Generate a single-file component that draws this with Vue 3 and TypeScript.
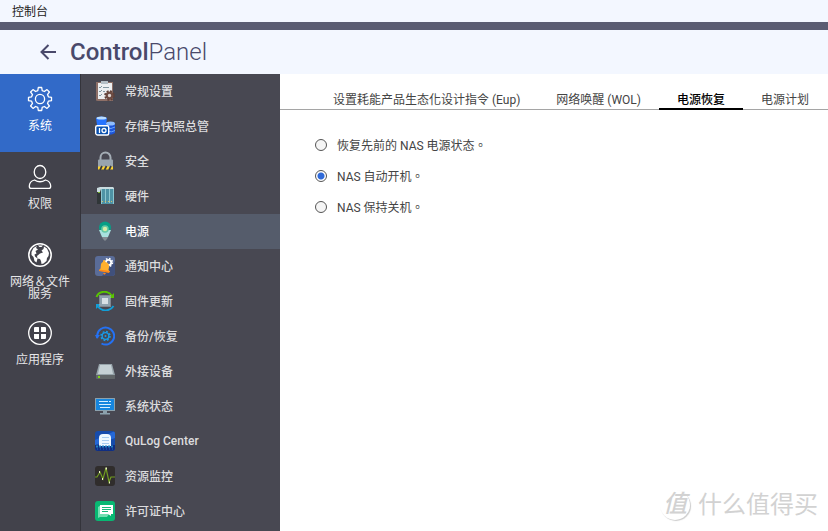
<script setup lang="ts">
import { ref } from 'vue'

interface Entry {
  id: string
  label: string
}

const sections: Entry[] = [
  { id: 'system', label: '系统' },
  { id: 'privilege', label: '权限' },
  { id: 'network', label: '网络＆文件服务' },
  { id: 'apps', label: '应用程序' },
]

const pages: Entry[] = [
  { id: 'general', label: '常规设置' },
  { id: 'storage', label: '存储与快照总管' },
  { id: 'security', label: '安全' },
  { id: 'hardware', label: '硬件' },
  { id: 'power', label: '电源' },
  { id: 'notify', label: '通知中心' },
  { id: 'firmware', label: '固件更新' },
  { id: 'backup', label: '备份/恢复' },
  { id: 'external', label: '外接设备' },
  { id: 'status', label: '系统状态' },
  { id: 'qulog', label: 'QuLog Center' },
  { id: 'resource', label: '资源监控' },
  { id: 'license', label: '许可证中心' },
]

const tabs: Entry[] = [
  { id: 'eup', label: '设置耗能产品生态化设计指令 (Eup)' },
  { id: 'wol', label: '网络唤醒 (WOL)' },
  { id: 'recovery', label: '电源恢复' },
  { id: 'schedule', label: '电源计划' },
]

const options: Entry[] = [
  { id: 'restore', label: '恢复先前的 NAS 电源状态。' },
  { id: 'on', label: 'NAS 自动开机。' },
  { id: 'off', label: 'NAS 保持关机。' },
]

const section = ref('system')
const page = ref('power')
const tab = ref('recovery')
const option = ref('on')
</script>

<template>
  <div class="window">
    <div class="titlebar">控制台</div>
    <header class="header">
      <button class="back" type="button" aria-label="返回">
        <svg width="16" height="16" viewBox="0 0 16 16" fill="none" stroke="currentColor" stroke-width="2">
          <path d="M16 8H1.5M8.5 1L1.5 8l7 7" />
        </svg>
      </button>
      <h1><b>Control</b>Panel</h1>
    </header>

    <div class="body">
      <nav class="sections">
        <button
          v-for="s in sections"
          :key="s.id"
          type="button"
          class="section"
          :class="{ active: section === s.id }"
          @click="section = s.id"
        >
          <svg width="26" height="26" viewBox="0 0 26 26" fill="none" stroke="#fff" stroke-width="1.3">
            <g v-if="s.id === 'system'" stroke-linejoin="round">
              <path d="M11.3 1.500h3.400l.5 3.100 2.200.9 2.600-1.900 2.400 2.400-1.900 2.600.9 2.200 3.100.5v3.400l-3.100.5-.9 2.200 1.900 2.600-2.400 2.400-2.600-1.900-2.200.9-.5 3.100h-3.400l-.5-3.100-2.200-.9L6 22.400 3.600 20l1.900-2.600-.9-2.200-3.100-.5v-3.400l3.100-.5.9-2.200L3.600 6 6 3.600l2.600 1.900 2.200-.9z" />
              <circle cx="13" cy="13" r="4.600" />
            </g>
            <g v-else-if="s.id === 'privilege'">
              <ellipse cx="13" cy="8" rx="5.800" ry="6.500" />
              <path d="M7.500 16C4 17 2.300 18.800 2.300 22.200c0 1.600.8 2.200 2 2.200h17.400c1.200 0 2-.6 2-2.200 0-3.400-1.700-5.200-5.200-6.200-3.400 2.200-7.600 2.200-11 0z" />
            </g>
            <g v-else-if="s.id === 'network'">
              <circle cx="13" cy="13" r="11.200" stroke-width="1.500" />
              <path fill="#fff" stroke="none" d="M4.500 10l2-4L10 4l-1 2 2 1.500-2.500 1.500 1 2.500-2 1 .5 2 2.500 2-1 4-2-1.500-1-4-2-2zM11 3.500h5L14.500 5h-2zM17 4.500l3 2 2 4.500-.5 3-1.500 2-.5 3-3 2.500-2 .5-.5-3-1-2-2.500-.5-.5-2.500 3-2.500 3-1-1.500-2 2-1.500z" />
            </g>
            <g v-else>
              <circle cx="13" cy="13" r="11.300" />
              <path fill="#fff" stroke="none" d="M8 7h3.500q.5 0 .5.500V12H7.500Q7 12 7 11.500V8q0-1 1-1zM14 7h4q1 0 1 1v3.500q0 .5-.5.500H14zM7 14h5v5H8q-1 0-1-1zM14 14h5v4q0 1-1 1h-4z" />
            </g>
          </svg>
          <span>{{ s.label }}</span>
        </button>
      </nav>

      <nav class="pages">
        <button
          v-for="p in pages"
          :key="p.id"
          type="button"
          class="page"
          :class="{ active: page === p.id }"
          @click="page = p.id"
        >
          <svg width="20" height="20" viewBox="0 0 20 20" fill="none">
            <g v-if="p.id === 'general'">
              <path fill="#8d6f67" d="M1 1h17v19H1z" />
              <path fill="#eceff1" d="M3 2h14v16H3z" />
              <path fill="#b4bfc6" d="M6 0h7v3H6z" />
              <path stroke="#8297a1" d="M4 6l1 1 2-2M8 6.500h6M4 10l1 1 2-2M8 10.500h2M4 14l1 1 2-2" />
              <circle cx="14.500" cy="14.500" r="4.300" stroke="#5f4038" stroke-width="2" stroke-dasharray="1.900 1.480" />
              <circle cx="14.500" cy="14.500" r="2.800" fill="#dcd6d4" stroke="#6d4b42" stroke-width="2.200" />
            </g>
            <g v-else-if="p.id === 'storage'">
              <path fill="#2774ff" d="M1 2q5-3 11 0l-1 7H2z" />
              <ellipse cx="6.500" cy="2" rx="5" ry="1.600" fill="#b9dcff" />
              <path fill="#1e55d7" d="M11 8h9v9q-4 3-9 1z" />
              <ellipse cx="15.500" cy="7.500" rx="4.500" ry="2" fill="#8fbeff" />
              <path stroke="#67a5ff" d="M12 12q4 1.500 8-1M13 15.500q4 1 7-1" />
              <rect x=".7" y="9.700" width="13" height="9.300" rx="1.500" fill="#084fae" stroke="#fff" stroke-width="1.400" />
              <path stroke="#fff" stroke-width="1.300" d="M4.500 12v5" />
              <circle cx="9" cy="14.500" r="2" stroke="#fff" stroke-width="1.300" />
            </g>
            <g v-else-if="p.id === 'security'">
              <path stroke="#a4adb5" stroke-width="2" d="M5.500 10V6.500a5 5 0 0 1 10 0V10" />
              <rect x="3" y="8.500" width="15" height="9" rx="1" fill="#98a4ae" />
              <path fill="#ffd52e" d="M3 15.500h15v3H3z" />
              <path stroke="#363a43" stroke-width="1.700" d="M7 15l-2 4M11.500 15l-2 4M16 15l-2 4" />
            </g>
            <g v-else-if="p.id === 'hardware'">
              <path fill="#303638" d="M2 3h4v15H2z" />
              <path fill="#4f93a5" d="M6 3h13v15H6z" />
              <path stroke="#8cc6d0" d="M6.500 3v15M10.500 3v14M14.500 3v14M18.500 3v15" />
              <path fill="#cadce0" d="M2 2l3-1h13l1 1v1H6L5 6H2z" />
              <path stroke="#77b72c" d="M3 6.500h2" />
              <path stroke="#d5bd65" stroke-dasharray="1 2" d="M7 15.500h11" />
            </g>
            <g v-else-if="p.id === 'power'">
              <circle cx="10" cy="6.500" r="6" fill="#079e86" />
              <path fill="#a9e1df" d="M4 9h12l-3 7H7z" />
              <circle cx="10" cy="8" r="3.800" fill="#65c8a5" />
              <circle cx="10" cy="8" r="2.200" fill="#d7eca7" />
              <path fill="#858c94" d="M7 16h6l-1 2-2 2-2-2z" />
            </g>
            <g v-else-if="p.id === 'notify'">
              <path fill="#5a6c98" d="M0 0h20v20H0z" />
              <path fill="#40507c" d="M20 5v15H7z" />
              <circle cx="13.500" cy="6.500" r="4" stroke="#fff" stroke-width="1.500" stroke-dasharray="1.570 1.570" />
              <circle cx="13.500" cy="6.500" r="2.700" stroke="#fff" stroke-width="1.800" />
              <path fill="#ffb02d" d="M8 4.500q1-1 2 0l.5 1.500q4 1 3.500 5l-.5 3 1.500 2-11-1.500 1.500-2L6 8q1-2 2-2z" />
              <path fill="#ff8817" d="M4 13.500L15 15l-1 2-10-2zM8 17h3l-1 1.500H9z" />
            </g>
            <g v-else-if="p.id === 'firmware'">
              <path stroke="#59c500" stroke-width="2" d="M1.500 6C4-.5 13-1 17 5" />
              <path fill="#59c500" d="M14 7h5V2z" />
              <path stroke="#119ed7" stroke-width="2" d="M18.500 15C15 20.500 7 21 3 15.500" />
              <path fill="#119ed7" d="M6 13H1v5z" />
              <rect x="5" y="5" width="10" height="10" fill="#8fa2ae" />
              <rect x="4.500" y="4.500" width="11" height="11" stroke="#b8c6ce" stroke-dasharray="1 1" />
              <rect x="7" y="7" width="6" height="6" fill="#d7e0e5" />
            </g>
            <g v-else-if="p.id === 'backup'">
              <path stroke="#2471f3" stroke-width="2" d="M2.200 12V9A8.500 8.500 0 1 1 6.500 17.500" />
              <path fill="#2471f3" d="M0 9h5l-3 4z" />
              <circle cx="10.500" cy="10" r="4.500" stroke="#189bea" stroke-width="1.500" stroke-dasharray="1.770 1.770" />
              <circle cx="10.500" cy="10" r="3.300" stroke="#189bea" stroke-width="1.300" />
              <circle cx="10.500" cy="10" r="1" fill="#189bea" />
            </g>
            <g v-else-if="p.id === 'external'">
              <path fill="#96a3aa" d="M4 3h13l3 11H1z" />
              <path fill="#c5d0d5" d="M5 4h11l2 9H3z" />
              <path fill="#616669" d="M1 14h19v4H2q-1 0-1-1z" />
              <path fill="#7fd516" d="M3 15h2v2H3z" />
            </g>
            <g v-else-if="p.id === 'status'">
              <path fill="#8ba1ad" d="M0 2h20v13H0zM8 15h4v2h3v1.500H5V17h3z" />
              <path fill="#1686df" d="M1 3h18v11H1z" />
              <path stroke="#d9efff" d="M4 5.500h9M14 5.500h2M4 8.500h12M5 11.500h10" />
            </g>
            <g v-else-if="p.id === 'qulog'">
              <path fill="#164cac" d="M0 0h20v20H0z" />
              <path fill="#2568d7" d="M0 9L20 0v7L0 14z" />
              <path fill="#102e83" d="M0 14h20v6H0z" />
              <path fill="#eef8ff" d="M4 15V7q0-4 4-4h4q4 0 4 4v8z" />
              <path stroke="#a8cdf1" d="M7 6.500h7M7 9.500h7M7 12.500h7" />
              <path stroke="#2384c4" stroke-width="2" stroke-dasharray="2 1" d="M1 15.500h18" />
              <path stroke="#176dbb" stroke-dasharray="1 2" d="M2 18h16" />
            </g>
            <g v-else-if="p.id === 'resource'">
              <path fill="#302d2c" d="M0 0h20v20H0z" />
              <path stroke="#709b22" stroke-width="1.200" d="M0 11h2l3-5 3 7 3-11 3 14 2-5h4" />
              <path fill="#edf5c6" d="M4 5h1v2H4zM7 12h1v2H7zM10.500 1.500h1.500v2h-1.500zM14 15.500h1v2h-1z" />
            </g>
            <g v-else>
              <path fill="#08b873" d="M0 0h20v20H0z" />
              <path fill="#73dfb2" d="M3 6l3-2v9h8l-2 3H5l-2 1z" />
              <path fill="#fff" d="M5 4h13v9h-2v2l-3-2H5z" />
              <path stroke="#19b97a" d="M7 6.500h9M7 8.500h9M7 10.500h6" />
            </g>
          </svg>
          <span>{{ p.label }}</span>
        </button>
      </nav>

      <main class="content">
        <div class="tabs" role="tablist">
          <button
            v-for="t in tabs"
            :key="t.id"
            type="button"
            role="tab"
            class="tab"
            :class="{ active: tab === t.id }"
            :aria-selected="tab === t.id"
            @click="tab = t.id"
          >
            {{ t.label }}
          </button>
        </div>
        <form class="options">
          <label v-for="o in options" :key="o.id" class="option">
            <input v-model="option" type="radio" name="recovery" :value="o.id" />
            <span>{{ o.label }}</span>
          </label>
        </form>
      </main>
    </div>

    <div class="watermark">
      <span class="seal">值</span>
      <span>什么值得买</span>
    </div>
  </div>
</template>

<style>
body {
  overflow: hidden;
}
</style>

<style scoped>
.window {
  position: relative;
  display: flex;
  flex-direction: column;
  height: 100vh;
  background: #fff;
  font-family: Roboto, "Noto Sans CJK SC", sans-serif;
  font-size: 12px;
}

button {
  margin: 0;
  padding: 0;
  border: 0;
  background: none;
  color: inherit;
  font: inherit;
  cursor: pointer;
}

.titlebar {
  flex: none;
  padding: 2px 0 0 12px;
  border-bottom: 8px solid #5a5c72;
  background: #f3f7ff;
  color: #222;
  line-height: 20px;
}

.header {
  display: flex;
  flex: none;
  align-items: center;
  gap: 14px;
  height: 44px;
  padding-left: 40px;
  background: #f3f7ff;
  color: #49496b;
}

.back {
  display: flex;
}

h1 {
  margin: 0;
  font-size: 24px;
  font-weight: 300;
  line-height: 44px;
}

h1 b {
  font-weight: 500;
}

.body {
  display: flex;
  flex: 1;
  min-height: 0;
}

.sections {
  flex: none;
  width: 80px;
  border-right: 1px solid #34343b;
  background: #42424b;
  color: #e6e6e8;
}

.section {
  display: flex;
  flex-direction: column;
  align-items: center;
  gap: 8px;
  width: 100%;
  height: 78px;
  padding: 12px 8px 0;
  line-height: 12px;
}

.section.active {
  background: #326ac8;
  color: #fff;
}

.section svg,
.page svg {
  flex: none;
}

.page svg {
  border-radius: 3px;
}

.pages {
  flex: none;
  width: 199px;
  background: #484852;
  color: #dcdcde;
  font-weight: 500;
}

.page {
  display: flex;
  align-items: center;
  gap: 10px;
  width: 100%;
  height: 35px;
  padding: 0 0 2px 14px;
  text-align: left;
}

.page.active {
  background: #555c6b;
  color: #fff;
}

.content {
  flex: 1;
  min-width: 0;
  background: #fff;
  color: #444;
  font-family: Roboto, "Noto Sans CJK TC", sans-serif;
}

.tabs {
  display: flex;
  height: 35px;
  padding-left: 35px;
  border-bottom: 1px solid #a5a5a5;
}

.tab {
  height: 36px;
  padding: 18px 18px 0;
  border-bottom: 2px solid transparent;
  line-height: 16px;
  white-space: nowrap;
}

.tab.active {
  border-color: #000;
  color: #000;
  font-weight: 500;
}

.options {
  padding: 19px 35px;
}

.option {
  display: flex;
  align-items: center;
  gap: 10px;
  height: 31px;
}

.option input {
  appearance: none;
  width: 12px;
  height: 12px;
  margin: 0;
  border: 1px solid #555;
  border-radius: 50%;
  background: #f5f5f5;
}

.option input:checked {
  background: radial-gradient(circle, #2f6ad9 3px, #fff 4px);
}

.watermark {
  position: absolute;
  right: 10px;
  bottom: 8px;
  display: flex;
  align-items: center;
  gap: 8px;
  color: #d2d2d2;
  font-size: 24px;
  line-height: 36px;
  pointer-events: none;
}

.seal {
  width: 30px;
  height: 30px;
  border-radius: 50%;
  box-shadow: 1px 1px 1px #ccc;
  font-style: italic;
  font-weight: 500;
  line-height: 28px;
  text-align: center;
}
</style>
